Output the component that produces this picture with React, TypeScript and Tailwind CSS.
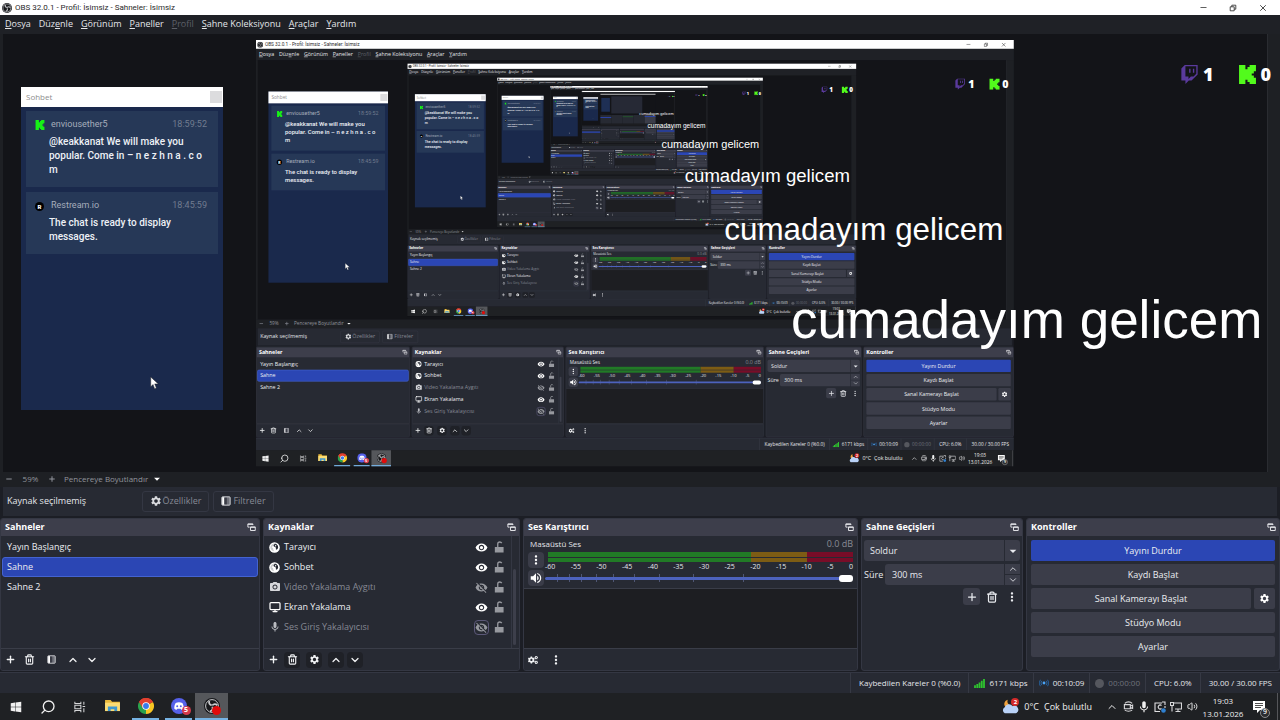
import React, { useId, useState } from 'react';
import {
  MdVisibility,
  MdVisibilityOff,
  MdPhotoCamera,
  MdMic,
  MdSettings,
  MdMoreVert,
  MdVolumeUp,
  MdArrowDropDown,
} from 'react-icons/md';
import { FaCogs, FaWindows } from 'react-icons/fa';
import { ChevronDown, ChevronUp, Plus, Minus, Search, Trash2, Monitor, X, Volume2 } from 'lucide-react';

// how many times the captured screen shows itself
const MIRROR_DEPTH = 5;

const menuItems = [
  { before: '', key: 'D', after: 'osya' },
  { before: 'Düz', key: 'e', after: 'nle' },
  { before: '', key: 'G', after: 'örünüm' },
  { before: '', key: 'P', after: 'aneller' },
  { before: '', key: 'P', after: 'rofil', disabled: true },
  { before: '', key: 'S', after: 'ahne Koleksiyonu' },
  { before: '', key: 'A', after: 'raçlar' },
  { before: '', key: 'Y', after: 'ardım' },
];

const scenes = ['Yayın Başlangıç', 'Sahne', 'Sahne 2'];

type SourceKind = 'browser' | 'camera' | 'screen' | 'mic';

const sources: { name: string; kind: SourceKind; visible: boolean; focused?: boolean }[] = [
  { name: 'Tarayıcı', kind: 'browser', visible: true },
  { name: 'Sohbet', kind: 'browser', visible: true },
  { name: 'Video Yakalama Aygıtı', kind: 'camera', visible: false },
  { name: 'Ekran Yakalama', kind: 'screen', visible: true },
  { name: 'Ses Giriş Yakalayıcısı', kind: 'mic', visible: false, focused: true },
];

const dbScale = ['-60', '-55', '-50', '-45', '-40', '-35', '-30', '-25', '-20', '-15', '-10', '-5', '0'];
const faderTicks = [12, 24, 36, 51, 68, 89, 114, 148, 198];

/* ---------- icons ---------- */

const ObsIcon = ({ className }: { className?: string }) => (
  <svg viewBox="0 0 24 24" className={className} aria-hidden="true">
    <circle cx="12" cy="12" r="12" fill="#17181b" />
    <circle cx="12" cy="12" r="9.6" fill="none" stroke="#c9cacd" strokeWidth="1.5" />
    <path d="M8 4.5c-1 3 .5 5.5 3.5 6.5M20 11c-2.5-2.5-5.5-2.3-7.5 0M9 20c3.5-.8 4.7-3.5 3.5-7" fill="none" stroke="#c9cacd" strokeWidth="2.6" />
  </svg>
);

const KickLogo = ({ className }: { className?: string }) => (
  <svg viewBox="0 0 24 24" className={className} fill="currentColor" aria-hidden="true">
    <path d="M1.333 0h8v5.333H12V2.667h2.667V0h8v8H20v2.667h-2.667v2.666H20V16h2.667v8h-8v-2.667H12v-2.666H9.333V24h-8Z" />
  </svg>
);

const TwitchLogo = ({ className }: { className?: string }) => (
  <svg viewBox="0 0 24 24" className={className} fill="currentColor" aria-hidden="true">
    <path d="M11.571 4.714h1.715v5.143H11.57zm4.715 0H18v5.143h-1.714zM6 0L1.714 4.286v15.428h5.143V24l4.286-4.286h3.428L22.286 12V0zm14.571 11.143l-3.428 3.428h-3.429l-3 3v-3H6.857V1.714h13.714Z" />
  </svg>
);

const GlobeIcon = ({ className }: { className?: string }) => (
  <svg viewBox="0 0 24 24" className={className} aria-hidden="true">
    <circle cx="12" cy="12" r="11.5" fill="#fff" />
    <path d="M13 3l-2 3 1 2-2 2-3-1-1 3 3 1v3l2 4c-5 0-8-4-8-8 0-5 4-9 10-9z" fill="#272a33" opacity=".25" />
    <path d="M12.500 4h3l4 4 .5 5-3 4-2-1v-4l-4-2-1-3z" fill="#272a33" />
    <path d="M14 6l2 1-1 3-2-1z" fill="#fff" />
  </svg>
);

const FilterIcon = ({ className }: { className?: string }) => (
  <svg viewBox="0 0 12 12" className={className} aria-hidden="true">
    <rect x="1" y="1" width="10" height="10" rx="1" fill="#6f717a" stroke="#e6e7ea" />
    <rect x="1.5" y="1.5" width="2.5" height="9" fill="#fff" />
    <path d="M4 2h3v8H4z" fill="#3a3c46" />
  </svg>
);

const PopoutIcon = () => (
  <svg viewBox="0 0 12 12" className="size-[9px]" aria-hidden="true">
    <path d="M3.500 5.500H1.200V1.200h6.600v1.600M1 1.800h7" fill="none" stroke="#e4e5e9" strokeWidth="1.3" />
    <path d="M4.700 5.200h6.300v4.800H4.700zM4.700 5.800h6.300" fill="#3d3e4b" stroke="#e4e5e9" strokeWidth="1.3" />
  </svg>
);

const RestoreIcon = () => (
  <svg viewBox="0 0 10 10" className="size-2" fill="none" stroke="#222" aria-hidden="true">
    <path d="M1.500 3.500h5v5h-5zM3.500 3.500v-2h5v5h-2" />
  </svg>
);

const LockOpenIcon = () => (
  <svg viewBox="0 0 12 14" className="h-[12px] w-[10px]" aria-hidden="true">
    <path d="M4.500 7V3.500a2.500 2.500 0 0 1 5 0V7" fill="none" stroke="#97999f" strokeWidth="1.600" strokeDasharray="9.500 20" />
    <path d="M1 7h10.500v6.500H1z" fill="#97999f" />
  </svg>
);

const TaskViewIcon = () => (
  <svg viewBox="0 0 14 14" className="size-3" fill="none" stroke="#d5d6d8" strokeWidth="1.2" aria-hidden="true">
    <path d="M1 1v2h7V1M1 13v-2h7v2M1 5h7v4H1zM11.500 1v3.500M11.500 8.500V13M10 6.500h3" />
  </svg>
);

const FolderIcon = () => (
  <svg viewBox="0 0 16 14" className="h-[13px] w-[15px]" aria-hidden="true">
    <path d="M0 1h6l1.500 2H16v10H0z" fill="#e9b93b" />
    <path d="M0 4h16v9H0z" fill="#fbdc74" />
    <path d="M3 13V8h10v5h-3v-2H6v2z" fill="#3f97cf" />
  </svg>
);

const ChromeIcon = () => (
  <svg viewBox="0 0 24 24" className="size-4" aria-hidden="true">
    <path d="M12 12L1.600 6A12 12 0 0 1 22.400 6z" fill="#e2402f" />
    <path d="M12 12L22.400 6A12 12 0 0 1 12 24z" fill="#f9c623" />
    <path d="M12 12L12 24A12 12 0 0 1 1.600 6z" fill="#2aa24c" />
    <path d="M12 6.500h10.600A12 12 0 0 0 1.600 6L7 15z" fill="#e2402f" />
    <circle cx="12" cy="12" r="5.6" fill="#fff" />
    <circle cx="12" cy="12" r="4.4" fill="#3a7bea" />
  </svg>
);

const DiscordIcon = () => (
  <svg viewBox="0 0 24 24" className="size-4" aria-hidden="true">
    <circle cx="12" cy="12" r="12" fill="#5661ea" />
    <path d="M7 7.500c3-1.500 7-1.500 10 0 1.500 2.500 2.300 5.500 2 8.500-1 .9-2.300 1.400-3.500 1.500l-1-1.500c-1.600.4-3.400.4-5 0l-1 1.500C7.300 17.400 6 16.900 5 16c-.3-3 .5-6 2-8.500z" fill="#fff" />
    <circle cx="9.3" cy="12.5" r="1.5" fill="#5661ea" />
    <circle cx="14.7" cy="12.5" r="1.5" fill="#5661ea" />
  </svg>
);

const WeatherIcon = () => (
  <svg viewBox="0 0 24 20" className="h-[15px] w-[18px]" aria-hidden="true">
    <path d="M9 1a6 6 0 1 0 7 8A6 6 0 0 1 9 1z" fill="#f2a33c" />
    <path d="M5 19a4.500 4.500 0 0 1 0-8 6 6 0 0 1 10.500-1.500A5 5 0 0 1 20 19z" fill="#b9d2f7" />
  </svg>
);

const SignalIcon = () => (
  <svg viewBox="0 0 12 10" className="h-[9px] w-[11px]" fill="#2fc42f" aria-hidden="true">
    <path d="M0 7h2v3H0zM2.500 5.500h2V10h-2zM5 4h2v6H5zM7.500 2h2v8h-2zM10 0h2v10h-2z" />
  </svg>
);

const StreamIcon = () => (
  <svg viewBox="0 0 14 10" className="h-2 w-[10px]" fill="none" stroke="#2565a5" strokeWidth="1.3" aria-hidden="true">
    <circle cx="7" cy="5" r="2" fill="#4aa3f5" stroke="none" />
    <path d="M4 2a4.500 4.500 0 0 0 0 6M10 2a4.500 4.500 0 0 1 0 6M2 .5a7 7 0 0 0 0 9M12 .5a7 7 0 0 1 0 9" />
  </svg>
);

const MeetIcon = () => (
  <svg viewBox="0 0 12 12" className="size-[11px]" fill="none" stroke="#d8d8da" strokeWidth="1.2" aria-hidden="true">
    <path d="M2 2.500C4 .5 8 .5 10 2.500M2 10c2 1.500 6 1.500 8 0M1.500 4h6.500v4.500H1.500zM8 5.500l2.500-1v3.500L8 7" />
  </svg>
);

const UpdateIcon = () => (
  <svg viewBox="0 0 12 12" className="size-3" fill="none" stroke="#e0e0e2" strokeWidth="1.1" aria-hidden="true">
    <path d="M6 10.500H1V2h7M8 1h3v3M11 5v2M7.500 4.500a2 2 0 1 0 0 3" />
    <circle cx="9.5" cy="9.5" r="2.3" fill="#2f80d0" stroke="none" />
  </svg>
);

const NetworkIcon = () => (
  <svg viewBox="0 0 12 12" className="size-3" fill="none" stroke="#d8d8da" strokeWidth="1.1" aria-hidden="true">
    <path d="M4 2h7.500v6H5M8 8v2.500M5.500 10.500h5M.500 1.500h3v3h-3zM2 4.500v6" />
  </svg>
);

const NotificationIcon = () => (
  <svg viewBox="0 0 12 12" className="size-3" aria-hidden="true">
    <path d="M0 0h12v9H7l-3 3V9H0z" fill="#fff" />
    <path d="M2 2.500h8M2 4.500h8M2 6.500h6" stroke="#222" strokeWidth=".8" />
  </svg>
);

const Cursor = () => (
  <svg viewBox="0 0 12 18" className="absolute top-[342px] left-[147px] h-[14px] w-[9px]" aria-hidden="true">
    <path d="M1 1v13l3-3 2.200 5.500 2.300-1L6.300 10.200H11z" fill="#fff" stroke="#222" strokeWidth=".6" />
  </svg>
);

/* ---------- preview content ---------- */

interface ChatMessageProps {
  icon: React.ReactNode;
  author: string;
  time: string;
  children: React.ReactNode;
}

const ChatMessage: React.FC<ChatMessageProps> = ({ icon, author, time, children }) => (
  <article className="bg-[#263857] pt-2 pr-2 pb-[10px] pl-[9px]">
    <header className="flex h-3 items-center pr-[3px] text-[9px] text-[#a5adbb]">
      <span className="flex w-4 items-center">{icon}</span>
      <span>{author}</span>
      <time className="ml-auto text-[#717c8f]">{time}</time>
    </header>
    <p className="mt-1 pl-[14px] text-[10px] leading-[14px] font-medium text-[#eef1f6]">{children}</p>
  </article>
);

const ChatWindow = () => (
  <section className="absolute top-[53px] left-[18px] flex h-[323px] w-[202px] flex-col bg-[#1a294c] font-[Roboto,sans-serif]">
    <div className="flex h-5 shrink-0 items-center justify-between bg-white pr-px pl-[5px] font-['Open_Sans',sans-serif] text-[8px] text-[#8d8d8d]">
      Sohbet
      <span className="size-3 bg-[#dcdcde]" />
    </div>
    <div className="flex flex-col gap-[5px] px-[5px] pt-1">
      <ChatMessage icon={<KickLogo className="size-[10px] text-[#16f016]" />} author="enviousether5" time="18:59:52">
        @keakkanat We will make you popular. Come in – n e z h n a . c o m
      </ChatMessage>
      <ChatMessage
        icon={<span className="flex size-[9px] items-center justify-center rounded-full bg-black text-[6px] font-black text-white">R</span>}
        author="Restream.io"
        time="18:45:59"
      >
        The chat is ready to display messages.
      </ChatMessage>
    </div>
  </section>
);

const ViewerCounts = () => (
  <div className="absolute top-[28px] left-[1177px] flex items-center gap-6 font-['Open_Sans',sans-serif] text-[18px] leading-6 font-extrabold text-white">
    <span className="flex items-center gap-1">
      <TwitchLogo className="size-[19px] text-[#5a3a9c]" />1
    </span>
    <span className="flex items-center gap-1">
      <KickLogo className="size-[19px] text-[#52fb1c]" />0
    </span>
  </div>
);

// innermost capture, too small to hold any text
const MirrorEnd = () => (
  <div className="flex flex-1 flex-col bg-[#131418]">
    <div className="h-[18px] bg-[#e8e8e8]" />
    <div className="flex flex-1 items-center gap-8 px-5">
      <div className="h-[320px] w-[200px] bg-[#1e2f54]" />
      <div className="h-[400px] w-[720px] bg-[#262935]" />
    </div>
    <div className="grid h-[200px] grid-cols-5 gap-1 bg-[#1c1e25]">
      <div className="bg-[#272a33] pt-12"><div className="h-5 bg-[#2b46b4]" /></div>
      <div className="bg-[#272a33]" />
      <div className="bg-[#272a33] pt-9"><div className="h-3 bg-[#217a26]" /></div>
      <div className="bg-[#272a33]" />
      <div className="bg-[#3b3d49] pt-6"><div className="h-5 bg-[#2b46b4]" /></div>
    </div>
    <div className="h-[27px] bg-[#1f2124]" />
  </div>
);

const Preview = ({ depth }: { depth: number }) => (
  <div className="relative min-h-0 flex-1 border-r border-[#2a2c31] bg-[#131418]">
    <div inert className="absolute top-[6px] left-[253px] flex h-[720px] w-[1280px] origin-top-left scale-[0.592]">
      {depth < MIRROR_DEPTH ? <ObsScreen depth={depth + 1} /> : <MirrorEnd />}
    </div>
    <ChatWindow />
    <ViewerCounts />
    <p className="absolute top-[256px] left-[788px] font-['Liberation_Sans',sans-serif] text-[53px] leading-[60px] whitespace-nowrap text-white">
      cumadayım gelicem
    </p>
    <Cursor />
  </div>
);

/* ---------- docks ---------- */

const Dock = ({ title, children }: { title: string; children: React.ReactNode }) => (
  <section className="flex min-w-0 flex-col overflow-hidden rounded-[3px] border border-[#343743] bg-[#272a33]">
    <header className="flex h-[17px] shrink-0 items-center justify-between bg-[#3d3e4b] pr-[3px] pb-px pl-1 text-[9px] font-bold text-white">
      <h2>{title}</h2>
      <button aria-label={`${title} ayır`}>
        <PopoutIcon />
      </button>
    </header>
    {children}
  </section>
);

const DockToolbar = ({ children }: { children: React.ReactNode }) => (
  <div className="flex h-[22px] shrink-0 items-center border-t border-[#3a3d48] bg-[#272a33] px-px text-[#f0f1f3]">{children}</div>
);

const ToolButton = ({ label, dark, children }: { label: string; dark?: boolean; children: React.ReactNode }) => (
  <button aria-label={label} className={`flex size-4 items-center justify-center rounded-sm ${dark ? 'bg-[#1f2127]' : ''}`}>
    {children}
  </button>
);

const ScenesDock = () => {
  const [current, setCurrent] = useState('Sahne');
  return (
    <Dock title="Sahneler">
      <ul className="flex-1 px-px pt-px text-[9px] text-[#eceef2]">
        {scenes.map((scene) => (
          <li key={scene}>
            <button
              onClick={() => setCurrent(scene)}
              className={`flex h-5 w-full items-center rounded-[3px] border px-1 ${
                scene === current ? 'border-[#4463d0] bg-[#2b46b4]' : 'border-transparent'
              }`}
            >
              {scene}
            </button>
          </li>
        ))}
      </ul>
      <DockToolbar>
        <div className="flex gap-[3px]">
          <ToolButton label="Sahne ekle"><Plus className="size-[11px]" strokeWidth={3} /></ToolButton>
          <ToolButton label="Sahneyi kaldır"><Trash2 className="size-[11px]" strokeWidth={2.5} /></ToolButton>
        </div>
        <div className="ml-[6px] flex gap-[3px]">
          <ToolButton label="Sahne filtreleri"><FilterIcon className="size-[9px]" /></ToolButton>
        </div>
        <div className="ml-[6px] flex gap-[3px]">
          <ToolButton label="Yukarı taşı"><ChevronUp className="size-3" strokeWidth={2.5} /></ToolButton>
          <ToolButton label="Aşağı taşı"><ChevronDown className="size-3" strokeWidth={2.5} /></ToolButton>
        </div>
      </DockToolbar>
    </Dock>
  );
};

const SourceIcon = ({ kind }: { kind: SourceKind }) => {
  if (kind === 'browser') return <GlobeIcon className="size-[11px]" />;
  if (kind === 'camera') return <MdPhotoCamera className="size-3 text-[#d6d7db]" />;
  if (kind === 'screen') return <Monitor className="size-3 text-white" strokeWidth={2.5} />;
  return <MdMic className="size-3 text-[#b9bbc1]" />;
};

const SourcesDock = () => (
  <Dock title="Kaynaklar">
    <div className="flex min-h-0 flex-1">
      <ul className="flex-1 pt-px pl-[5px] text-[9px]">
        {sources.map((source) => (
          <li key={source.name} className="flex h-5 items-center">
            <span className="flex w-[15px] items-center">
              <SourceIcon kind={source.kind} />
            </span>
            <span className={source.visible ? 'text-[#eceef2]' : 'text-[#868993]'}>{source.name}</span>
            <button
              aria-label={`${source.name} görünürlüğü`}
              className={`ml-auto flex size-[15px] items-center justify-center rounded-sm border ${
                source.focused ? 'border-[#5b5878]' : 'border-transparent'
              }`}
            >
              {source.visible ? (
                <MdVisibility className="size-[13px] shrink-0 text-white" />
              ) : (
                <MdVisibilityOff className="size-[13px] shrink-0 text-[#97999f]" />
              )}
            </button>
            <button aria-label={`${source.name} kilidi`} className="mr-1 ml-[2px] flex size-4 items-center justify-center">
              <LockOpenIcon />
            </button>
          </li>
        ))}
      </ul>
      <div className="mr-[3px] flex w-[5px] flex-col justify-end border-l border-[#343743] pb-[3px] pl-px">
        <div className="h-[76px] rounded-sm bg-[#3d3f4b]" />
      </div>
    </div>
    <DockToolbar>
      <div className="flex gap-[3px]">
        <ToolButton label="Kaynak ekle"><Plus className="size-[11px]" strokeWidth={3} /></ToolButton>
        <ToolButton label="Kaynağı kaldır" dark><Trash2 className="size-[11px]" strokeWidth={2.5} /></ToolButton>
      </div>
      <div className="ml-[6px]">
        <ToolButton label="Kaynak özellikleri" dark><MdSettings className="size-[11px]" /></ToolButton>
      </div>
      <div className="ml-[6px] flex gap-[3px]">
        <ToolButton label="Yukarı taşı" dark><ChevronUp className="size-3" strokeWidth={2.5} /></ToolButton>
        <ToolButton label="Aşağı taşı" dark><ChevronDown className="size-3" strokeWidth={2.5} /></ToolButton>
      </div>
    </DockToolbar>
  </Dock>
);

const MixerDock = () => (
  <Dock title="Ses Karıştırıcı">
    <div className="h-[53px] shrink-0 border-b border-[#3a3d48] px-1">
      <div className="flex h-4 items-center justify-between pl-[2px] text-[8px] text-[#e3e5ea]">
        <span>Masaüstü Ses</span>
        <span className="text-[9px] text-[#898c95]">0.0 dB</span>
      </div>
      <div className="flex gap-px">
        <div className="flex flex-col gap-[2px]">
          <button aria-label="Ses seçenekleri" className="flex size-4 items-center justify-center rounded-sm bg-[#3a3c48] text-white">
            <MdMoreVert className="size-[14px]" />
          </button>
          <button aria-label="Sesi kapat" className="flex size-4 items-center justify-center rounded-sm bg-[#3a3c48] text-white">
            <MdVolumeUp className="size-[14px]" />
          </button>
        </div>
        <div className="flex-1">
          <div className="ml-[3px] grid h-[10px] grid-cols-[203fr_56fr_46fr] grid-rows-2 gap-y-px">
            <span className="bg-[#217a26]" />
            <span className="bg-[#7d5c14]" />
            <span className="bg-[#780d28]" />
            <span className="bg-[#217a26]" />
            <span className="bg-[#7d5c14]" />
            <span className="bg-[#780d28]" />
          </div>
          <div className="flex h-[9px] justify-between text-[7px] leading-[9px] text-[#e3e5ea]">
            {dbScale.map((db) => (
              <span key={db}>{db}</span>
            ))}
          </div>
          <div className="relative flex h-[14px] items-center">
            {faderTicks.map((x) => (
              <i key={x} className="absolute h-2 w-px bg-[#4f5675]" style={{ left: x }} />
            ))}
            <input
              type="range"
              aria-label="Masaüstü Ses düzeyi"
              min={0}
              max={100}
              defaultValue={100}
              className="relative h-[3px] w-full appearance-none rounded-full bg-[#4d62bd] [&::-webkit-slider-thumb]:h-[7px] [&::-webkit-slider-thumb]:w-[14px] [&::-webkit-slider-thumb]:appearance-none [&::-webkit-slider-thumb]:rounded-[3px] [&::-webkit-slider-thumb]:bg-white"
            />
          </div>
        </div>
      </div>
    </div>
    <div className="flex-1 bg-[#1d1e22]" />
    <DockToolbar>
      <ToolButton label="Gelişmiş ses özellikleri"><FaCogs className="size-[10px]" /></ToolButton>
      <span className="w-[7px]" />
      <ToolButton label="Karıştırıcı menüsü"><MdMoreVert className="size-[14px]" /></ToolButton>
    </DockToolbar>
  </Dock>
);

const TransitionsDock = () => {
  const durationId = useId();
  return (
    <Dock title="Sahne Geçişleri">
      <div className="flex flex-col gap-[3px] px-[2px] pt-1 text-[9px] text-[#e9ebef]">
        <div className="grid grid-cols-1 items-center">
          <select aria-label="Geçiş" className="col-start-1 row-start-1 h-[21px] w-full appearance-none rounded-[3px] bg-[#3b3d49] px-[6px]">
            <option>Soldur</option>
            <option>Kes</option>
          </select>
          <span className="pointer-events-none col-start-1 row-start-1 flex h-[21px] w-4 items-center justify-center justify-self-end border-l border-[#272a33]">
            <MdArrowDropDown className="size-4 shrink-0" />
          </span>
        </div>
        <div className="flex items-center">
          <label htmlFor={durationId} className="w-[21px] shrink-0">Süre</label>
          <input id={durationId} defaultValue="300 ms" className="h-[21px] w-0 flex-1 rounded-l-[3px] bg-[#3b3d49] px-[7px]" />
          <div className="ml-px flex w-[15px] flex-col gap-px">
            <button aria-label="Artır" className="flex h-[10px] items-center justify-center bg-[#3b3d49]"><ChevronUp className="size-[10px]" /></button>
            <button aria-label="Azalt" className="flex h-[10px] items-center justify-center bg-[#3b3d49]"><ChevronDown className="size-[10px]" /></button>
          </div>
        </div>
        <div className="flex justify-end gap-[3px]">
          <button aria-label="Geçiş ekle" className="flex size-[17px] items-center justify-center rounded-[3px] bg-[#3b3d49]"><Plus className="size-3" strokeWidth={2.5} /></button>
          <button aria-label="Geçişi kaldır" className="flex size-[17px] items-center justify-center"><Trash2 className="size-3" strokeWidth={2.5} /></button>
          <button aria-label="Geçiş özellikleri" className="flex size-[17px] items-center justify-center"><MdMoreVert className="size-[14px]" /></button>
        </div>
      </div>
    </Dock>
  );
};

const controlClass = 'flex h-[21px] flex-1 items-center justify-center rounded-[2px]';

const ControlsDock = () => (
  <Dock title="Kontroller">
    <div className="flex flex-col gap-[3px] px-1 pt-1 text-[9px] text-[#eceef2]">
      <div className="flex"><button className={`${controlClass} bg-[#2b46b4]`}>Yayını Durdur</button></div>
      <div className="flex"><button className={`${controlClass} bg-[#3b3d49]`}>Kaydı Başlat</button></div>
      <div className="flex gap-[3px]">
        <button className={`${controlClass} bg-[#3b3d49]`}>Sanal Kamerayı Başlat</button>
        <button aria-label="Sanal kamera ayarları" className="flex h-[21px] w-[21px] items-center justify-center rounded-[2px] bg-[#3b3d49] text-white">
          <MdSettings className="size-[11px]" />
        </button>
      </div>
      <div className="flex"><button className={`${controlClass} bg-[#3b3d49]`}>Stüdyo Modu</button></div>
      <div className="flex"><button className={`${controlClass} bg-[#3b3d49]`}>Ayarlar</button></div>
    </div>
  </Dock>
);

/* ---------- bars ---------- */

const TitleBar = () => (
  <header className="flex h-[15px] shrink-0 items-center bg-white px-[2px] font-[Roboto,sans-serif] text-[8px] text-[#2a2a2a]">
    <ObsIcon className="mr-[3px] size-[10px]" />
    <h1>OBS 32.0.1 - Profil: İsimsiz - Sahneler: İsimsiz</h1>
    <div className="ml-auto flex">
      <button aria-label="Küçült" className="flex w-[30px] items-center justify-center"><Minus className="size-[9px]" /></button>
      <button aria-label="Geri yükle" className="flex w-[30px] items-center justify-center"><RestoreIcon /></button>
      <button aria-label="Kapat" className="flex w-[30px] items-center justify-center"><X className="size-[10px]" /></button>
    </div>
  </header>
);

const MenuBar = () => (
  <nav className="flex h-[19px] shrink-0 items-center gap-2 bg-[#1f2126] px-[5px] pb-px text-[9px] text-[#e4e6ea]">
    {menuItems.map((item) => (
      <button key={item.before + item.key + item.after} className={item.disabled ? 'text-[#5d6068]' : ''}>
        {item.before}
        <u className="underline-offset-1">{item.key}</u>
        {item.after}
      </button>
    ))}
  </nav>
);

const ZoomBar = () => (
  <div className="flex h-[15px] shrink-0 items-center bg-[#1e2024] pb-px pl-[5px] text-[8px] text-[#91949c]">
    <button aria-label="Uzaklaştır" className="w-2"><Minus className="size-2" strokeWidth={3} /></button>
    <span className="w-[35px] text-center">59%</span>
    <button aria-label="Yakınlaştır" className="w-2"><Plus className="size-2" strokeWidth={3} /></button>
    <button className="ml-2 flex items-center gap-[2px]">
      Pencereye Boyutlandır
      <MdArrowDropDown className="size-[14px] text-white" />
    </button>
  </div>
);

const ContextBar = () => (
  <div className="mx-[3px] flex h-[29px] shrink-0 items-center bg-[#272a33] pb-px pl-1 text-[9px]">
    <span className="w-[135px] text-[#e4e6ea]">Kaynak seçilmemiş</span>
    <button className="flex h-[21px] w-[67px] items-center justify-center gap-px rounded-[3px] border border-[#343743] text-[#868993]">
      <MdSettings className="size-3 text-[#d9dade]" />
      Özellikler
    </button>
    <button className="ml-1 flex h-[21px] w-[61px] items-center justify-center gap-[2px] rounded-[3px] border border-[#343743] text-[#868993]">
      <FilterIcon className="size-[10px]" />
      Filtreler
    </button>
  </div>
);

const StatusBar = () => (
  <footer className="flex h-[21px] shrink-0 items-stretch justify-end border-t border-[#343743] bg-[#272a33] text-[8px] text-[#e4e6ea]">
    <span className="flex items-center border-l border-[#363944] px-2">Kaybedilen Kareler 0 (%0.0)</span>
    <span className="flex items-center gap-1 border-l border-[#363944] px-[5px]"><SignalIcon />6171 kbps</span>
    <span className="flex items-center gap-1 border-l border-[#363944] px-[5px]"><StreamIcon />00:10:09</span>
    <span className="flex items-center gap-1 border-l border-[#363944] px-[5px] text-[#6f727b]">
      <i className="size-[9px] rounded-full bg-[#55575e]" />00:00:00
    </span>
    <span className="flex items-center border-l border-[#363944] px-2">CPU: 6.0%</span>
    <span className="flex items-center border-l border-[#363944] px-2">30.00 / 30.00 FPS</span>
  </footer>
);

const TaskButton = ({ label, state, children }: { label: string; state?: 'open' | 'active'; children: React.ReactNode }) => (
  <button aria-label={label} className={`flex w-[33px] flex-col items-center ${state === 'active' ? 'bg-[#55575b]' : ''}`}>
    <span className="flex flex-1 items-center">{children}</span>
    <span className={`h-[2px] ${state === 'active' ? 'w-full bg-[#76b3e4]' : state === 'open' ? 'w-[27px] bg-[#76b3e4]' : 'w-0'}`} />
  </button>
);

const Taskbar = () => (
  <div className="flex h-[27px] shrink-0 bg-[#1f2124] text-[9px] text-[#f0f0f0]">
    <div className="flex">
      <button aria-label="Başlat" className="flex w-8 items-center justify-center"><FaWindows className="size-3" /></button>
      <button aria-label="Ara" className="flex w-8 items-center justify-center"><Search className="size-4 -scale-x-100" /></button>
      <button aria-label="Görev görünümü" className="flex w-8 items-center justify-center"><TaskViewIcon /></button>
      <TaskButton label="Dosya Gezgini"><FolderIcon /></TaskButton>
      <TaskButton label="Chrome" state="open"><ChromeIcon /></TaskButton>
      <TaskButton label="Discord" state="open">
        <span className="relative">
          <DiscordIcon />
          <b className="absolute -right-1 -bottom-px flex size-[9px] items-center justify-center rounded-full bg-[#d63a4c] text-[7px] text-white">5</b>
        </span>
      </TaskButton>
      <TaskButton label="OBS" state="active">
        <span className="relative">
          <ObsIcon className="size-4" />
          <i className="absolute -right-px -bottom-px size-[9px] rounded-full bg-[#e00b0b]" />
        </span>
      </TaskButton>
    </div>
    <div className="ml-auto flex items-center">
      <button className="flex items-center gap-[5px]">
        <span className="relative">
          <WeatherIcon />
          <b className="absolute -top-px right-0 flex size-2 items-center justify-center rounded-full bg-[#d42a2a] text-[6px] text-white">2</b>
        </span>
        <span>0°C</span>
        <span>Çok bulutlu</span>
      </button>
      <div className="ml-3 flex *:flex *:w-4 *:items-center *:justify-center">
        <button aria-label="Gizli simgeler"><ChevronUp className="size-3" /></button>
        <button aria-label="Toplantı"><MeetIcon /></button>
        <button aria-label="Mikrofon"><MdMic className="size-[14px]" /></button>
        <button aria-label="Güncelleme"><UpdateIcon /></button>
        <button aria-label="Ağ"><NetworkIcon /></button>
        <button aria-label="Ses"><Volume2 className="size-[11px]" /></button>
      </div>
      <time className="w-[46px] text-center text-[8px] leading-[13px]">
        19:03
        <br />
        13.01.2026
      </time>
      <button aria-label="Bildirimler" className="relative ml-[7px]">
        <NotificationIcon />
        <b className="absolute -right-[5px] -bottom-[5px] flex size-[10px] items-center justify-center rounded-full border border-[#8b8b8d] bg-[#2b2c2f] text-[7px] font-semibold">9</b>
      </button>
      <span className="mr-[2px] ml-3 h-[27px] w-px bg-[#55565a]" />
    </div>
  </div>
);

const ObsScreen = ({ depth }: { depth: number }) => (
  <div className="flex min-w-0 flex-1 flex-col bg-[#1c1e25] font-['Open_Sans',sans-serif]">
    <TitleBar />
    <MenuBar />
    <main className="flex min-h-0 flex-1 flex-col">
      <div className="flex min-h-0 flex-1 bg-[#1e2024] pr-3 pl-[3px]">
        <Preview depth={depth} />
      </div>
      <ZoomBar />
      <ContextBar />
      <div className="mt-[2px] mb-px grid h-[153px] shrink-0 grid-cols-[260fr_257fr_335fr_162fr_254fr] gap-[3px]">
        <ScenesDock />
        <SourcesDock />
        <MixerDock />
        <TransitionsDock />
        <ControlsDock />
      </div>
    </main>
    <StatusBar />
    <Taskbar />
  </div>
);

export default function App() {
  return (
    <div className="flex h-screen overflow-hidden">
      <ObsScreen depth={0} />
    </div>
  );
}
